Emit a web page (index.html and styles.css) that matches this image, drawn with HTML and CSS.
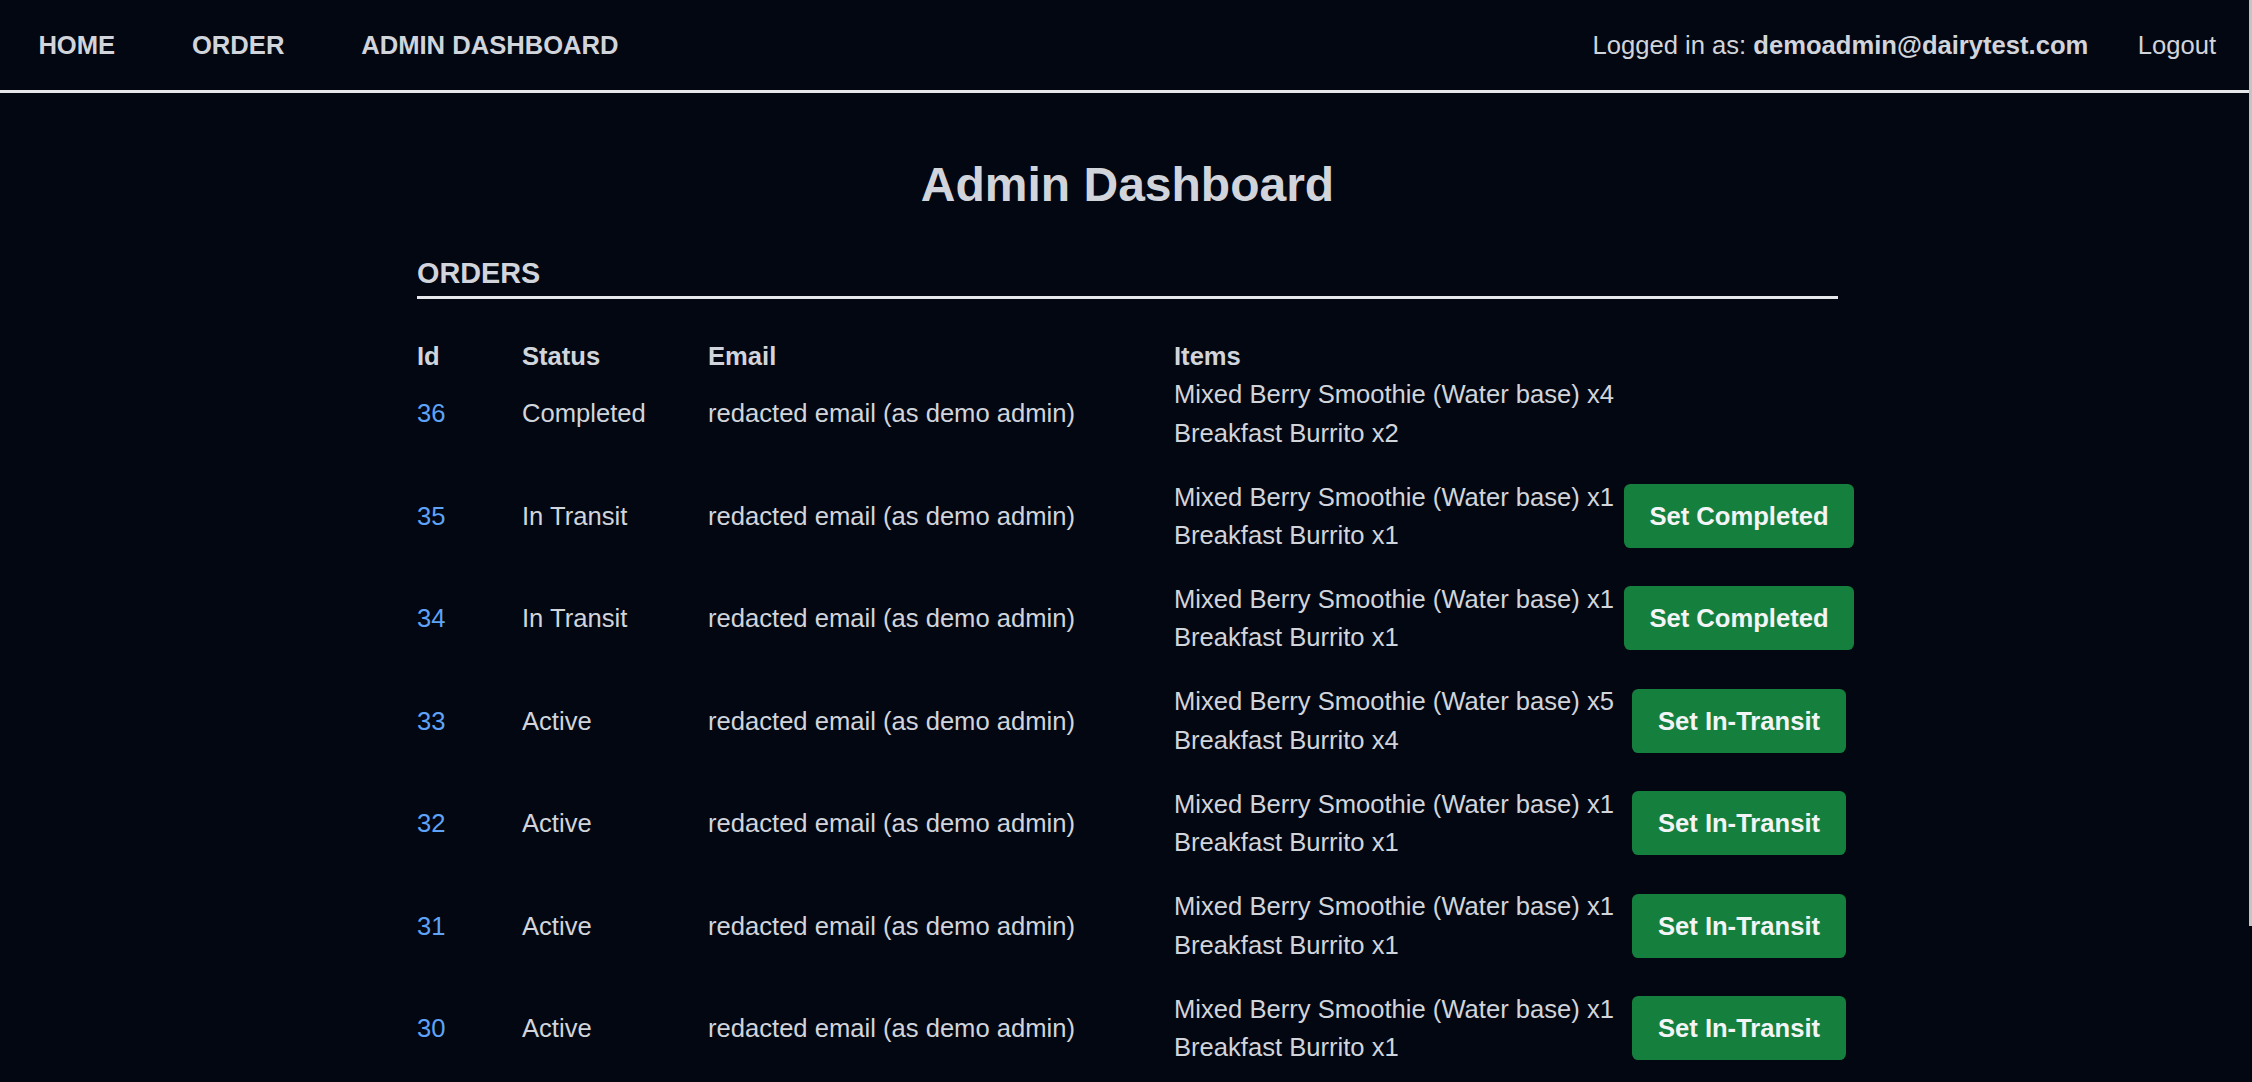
FILE: index.html
```html
<!DOCTYPE html>
<html lang="en">
<head>
<meta charset="utf-8">
<title>Admin Dashboard</title>
<link rel="stylesheet" href="styles.css">
</head>
<body>
<nav class="nav">
  <div class="nav-left">
    <a class="nav-link" href="#">HOME</a>
    <a class="nav-link" href="#">ORDER</a>
    <a class="nav-link" href="#">ADMIN DASHBOARD</a>
  </div>
  <div class="nav-right">
    <span class="user">Logged in as: <b>demoadmin@dairytest.com</b></span>
    <a class="nav-link logout" href="#">Logout</a>
  </div>
</nav>
<main class="main">
  <h1 class="title">Admin Dashboard</h1>
  <section class="orders">
    <h2 class="section-title">ORDERS</h2>
    <div class="table">
      <div class="row head">
        <div class="cell">Id</div>
        <div class="cell">Status</div>
        <div class="cell">Email</div>
        <div class="cell">Items</div>
        <div class="cell"></div>
      </div>
      <div class="rows">
        <div class="row">
          <div class="cell"><a class="id" href="#">36</a></div>
          <div class="cell">Completed</div>
          <div class="cell">redacted email (as demo admin)</div>
          <div class="cell items"><div>Mixed Berry Smoothie (Water base) x4</div><div>Breakfast Burrito x2</div></div>
          <div class="cell action"></div>
        </div>
        <div class="row">
          <div class="cell"><a class="id" href="#">35</a></div>
          <div class="cell">In Transit</div>
          <div class="cell">redacted email (as demo admin)</div>
          <div class="cell items"><div>Mixed Berry Smoothie (Water base) x1</div><div>Breakfast Burrito x1</div></div>
          <div class="cell action"><button class="btn">Set Completed</button></div>
        </div>
        <div class="row">
          <div class="cell"><a class="id" href="#">34</a></div>
          <div class="cell">In Transit</div>
          <div class="cell">redacted email (as demo admin)</div>
          <div class="cell items"><div>Mixed Berry Smoothie (Water base) x1</div><div>Breakfast Burrito x1</div></div>
          <div class="cell action"><button class="btn">Set Completed</button></div>
        </div>
        <div class="row">
          <div class="cell"><a class="id" href="#">33</a></div>
          <div class="cell">Active</div>
          <div class="cell">redacted email (as demo admin)</div>
          <div class="cell items"><div>Mixed Berry Smoothie (Water base) x5</div><div>Breakfast Burrito x4</div></div>
          <div class="cell action"><button class="btn">Set In-Transit</button></div>
        </div>
        <div class="row">
          <div class="cell"><a class="id" href="#">32</a></div>
          <div class="cell">Active</div>
          <div class="cell">redacted email (as demo admin)</div>
          <div class="cell items"><div>Mixed Berry Smoothie (Water base) x1</div><div>Breakfast Burrito x1</div></div>
          <div class="cell action"><button class="btn">Set In-Transit</button></div>
        </div>
        <div class="row">
          <div class="cell"><a class="id" href="#">31</a></div>
          <div class="cell">Active</div>
          <div class="cell">redacted email (as demo admin)</div>
          <div class="cell items"><div>Mixed Berry Smoothie (Water base) x1</div><div>Breakfast Burrito x1</div></div>
          <div class="cell action"><button class="btn">Set In-Transit</button></div>
        </div>
        <div class="row">
          <div class="cell"><a class="id" href="#">30</a></div>
          <div class="cell">Active</div>
          <div class="cell">redacted email (as demo admin)</div>
          <div class="cell items"><div>Mixed Berry Smoothie (Water base) x1</div><div>Breakfast Burrito x1</div></div>
          <div class="cell action"><button class="btn">Set In-Transit</button></div>
        </div>
      </div>
    </div>
  </section>
</main>
<div class="scroll-thumb"></div>
</body>
</html>
```
FILE: styles.css
```css
html, body {
  margin: 0;
  padding: 0;
  overflow: hidden;
  height: 100%;
}
body {
  background: #030712;
  color: #d1d5db;
  font-family: "Liberation Sans", Arial, sans-serif;
  font-size: 25.6px;
  line-height: 38.4px;
}
a {
  color: inherit;
  text-decoration: none;
}
.nav {
  display: flex;
  justify-content: space-between;
  align-items: center;
  padding: 25.6px 0;
  border-bottom: 3.2px solid #e5e7eb;
}
.nav-left, .nav-right {
  display: flex;
  align-items: center;
}
.nav-link {
  padding: 0 38.4px;
  font-weight: 700;
}
.logout {
  font-weight: 400;
  padding-right: 36px;
}
.user {
  margin-right: 11px;
}
.user b {
  font-weight: 700;
}
.main {
  width: 1421px;
  padding-left: 3px;
  margin: 0 auto;
}
.title {
  margin: 63.2px 0 37.6px;
  font-size: 48px;
  line-height: 57.6px;
  font-weight: 700;
  text-align: center;
}
.section-title {
  margin: 0 0 38.1px;
  font-size: 28.8px;
  line-height: 44.8px;
  font-weight: 700;
  border-bottom: 3.2px solid #e5e7eb;
}
.row {
  display: grid;
  grid-template-columns: 105px 186px 466px 438px 254px;
  align-items: center;
  white-space: nowrap;
}
.head {
  font-weight: 700;
}
.rows {
  display: flex;
  flex-direction: column;
  gap: 25.6px;
}
.id {
  color: #5ea3f7;
}
.action {
  display: flex;
  justify-content: center;
}
.btn {
  font-family: inherit;
  font-size: 25.6px;
  line-height: 38.4px;
  font-weight: 700;
  color: #f3f4f6;
  background: #15803d;
  border: none;
  border-radius: 6.4px;
  padding: 12.8px 25.6px;
  margin: 0;
}
.scroll-thumb {
  position: fixed;
  top: 0;
  right: 0;
  width: 3px;
  height: 926px;
  background: #c4c4c4;
}
```
